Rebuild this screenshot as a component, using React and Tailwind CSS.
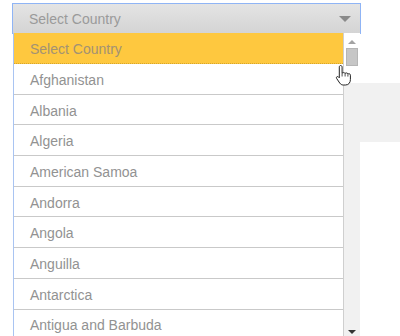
import React from "react";

const countries = [
  "Afghanistan",
  "Albania",
  "Algeria",
  "American Samoa",
  "Andorra",
  "Angola",
  "Anguilla",
  "Antarctica",
  "Antigua and Barbuda",
  "Argentina",
];

function HandCursor() {
  return (
    <svg width="18" height="22" viewBox="0 0 18 22" className="absolute left-[335px] top-[64px]">
      <path
        d="M5.5 1.5c1 0 1.6.7 1.6 1.6v6.2c.3-.9 2.7-1 3 .2.5-.9 2.6-.8 2.8.6.6-.7 2.5-.5 2.5 1.1v4.3c0 3-1.6 5.5-5 5.5H8.3c-1.7 0-2.6-.7-3.6-2L1.6 14.4c-.7-1 .4-2.4 1.7-1.6l1 1V3.1c0-.9.5-1.6 1.2-1.6z"
        fill="#fff"
        stroke="#222"
        strokeWidth="1"
        strokeLinejoin="round"
      />
      <path d="M7.1 9.3v3.2M10.1 9.5v3M12.9 10.3v2.3" stroke="#222" strokeWidth="0.8" />
    </svg>
  );
}

export default function App() {
  return (
    <div className="relative w-[400px] h-[336px] overflow-hidden bg-white font-['Liberation_Sans',Arial,sans-serif]">
      {/* page behind the open select */}
      <div className="flex h-full">
        <div className="w-[343px] shrink-0" />
        <div className="flex-1 mt-[83px] bg-[#f1f1f1] pl-[17px] pt-[59px]">
          <div className="h-full bg-white" />
        </div>
      </div>

      {/* select box */}
      <div className="absolute left-[12px] top-[3px] w-[349px] h-[31px] border border-[#8fb4f5] bg-gradient-to-b from-[#e4e4e4] to-[#d4d4d4] flex items-center pl-[16px] pr-[8px]">
        <span className="flex-1 pt-[2px] text-[14px] text-[#9a9a9a]">Select Country</span>
        <span className="w-0 h-0 border-l-[6px] border-r-[6px] border-t-[6px] border-l-transparent border-r-transparent border-t-[#8a8a8a] mr-[1px]" />
      </div>

      {/* dropdown list */}
      <div className="absolute left-[13px] top-[33px] w-[347px] h-[303px] flex border-l border-[#a9c4f2]">
        <div className="w-[330px] flex flex-col overflow-hidden bg-white border-r border-[#cfcfcf]">
          <div className="h-[31px] shrink-0 bg-[#fec83f] border-b border-dotted border-[#d6a52c] flex items-center pl-[16px] pt-[2px] text-[14px] text-[#a39274]">
            Select Country
          </div>
          {countries.map((c) => (
            <div
              key={c}
              className="h-[30.7px] shrink-0 border-b border-[#c9c9c9] flex items-center pl-[16px] pt-[3px] text-[14px] text-[#929292]"
            >
              {c}
            </div>
          ))}
        </div>
        <div className="flex-1 flex flex-col items-center">
          <div className="w-full h-[50px] bg-white flex flex-col items-center">
            <span className="mt-[7px] w-0 h-0 border-l-[4px] border-r-[4px] border-b-[4px] border-l-transparent border-r-transparent border-b-[#a3a3a3]" />
            <span className="mt-[4px] w-[12px] h-[18px] bg-[#c6c6c6] border border-[#b5b5b5]" />
          </div>
          <div className="w-full flex-1 flex flex-col items-center justify-end bg-[#f1f1f1]">
            <span className="mb-[2px] w-0 h-0 border-l-[4px] border-r-[4px] border-t-[4px] border-l-transparent border-r-transparent border-t-[#333]" />
          </div>
        </div>
      </div>

      <HandCursor />
    </div>
  );
}
